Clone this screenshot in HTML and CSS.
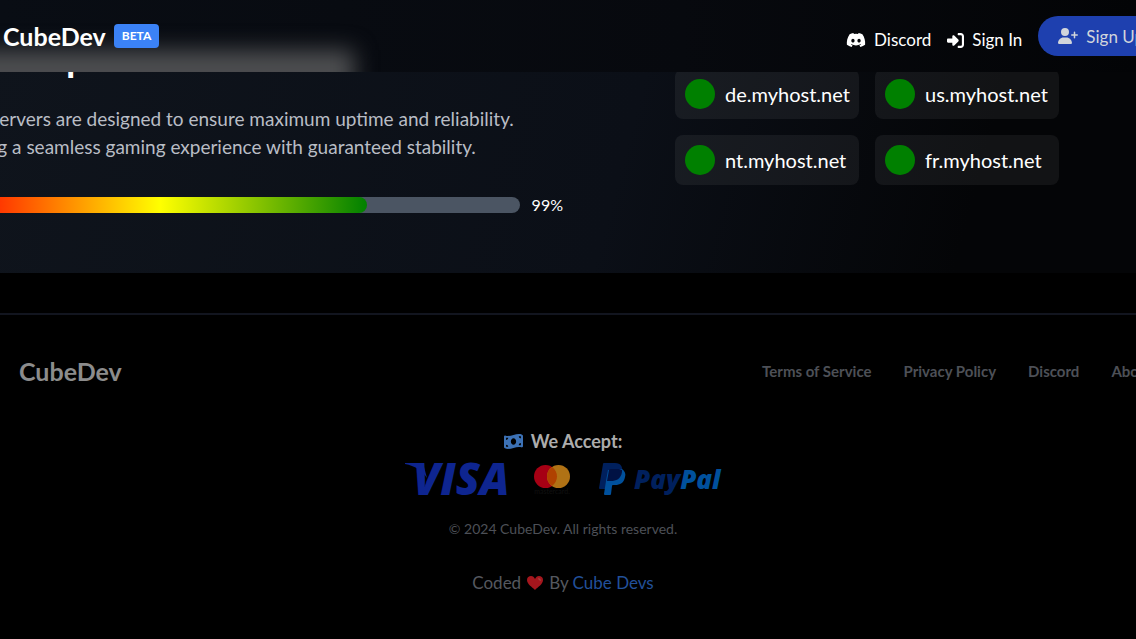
FILE: index.html
```html
<!DOCTYPE html>
<html lang="en">
<head>
  <meta charset="UTF-8" />
  <meta name="viewport" content="width=device-width, initial-scale=1.0" />
  <title>CubeDev</title>
  <link rel="stylesheet" href="styles.css">
</head>
<body>
  <header class="topbar">
    <a class="brand" href="#">CubeDev</a>
    <span class="badge">BETA</span>
    <nav class="topnav">
      <a href="#">
        <svg class="icon-discord" viewBox="0 0 640 512" fill="currentColor"><path d="M524.531,69.836a1.5,1.5,0,0,0-.764-.7A485.065,485.065,0,0,0,404.081,32.03a1.816,1.816,0,0,0-1.923.91,337.461,337.461,0,0,0-14.9,30.6,447.848,447.848,0,0,0-134.426,0,309.541,309.541,0,0,0-15.135-30.6,1.89,1.89,0,0,0-1.924-.91A483.689,483.689,0,0,0,116.085,69.137a1.712,1.712,0,0,0-.788.676C39.068,183.651,18.186,294.69,28.43,404.354a2.016,2.016,0,0,0,.765,1.375A487.666,487.666,0,0,0,176.02,479.918a1.9,1.9,0,0,0,2.063-.676A348.2,348.2,0,0,0,208.12,430.4a1.86,1.86,0,0,0-1.019-2.588,321.173,321.173,0,0,1-45.868-21.853,1.885,1.885,0,0,1-.185-3.126c3.082-2.309,6.166-4.711,9.109-7.137a1.819,1.819,0,0,1,1.9-.256c96.229,43.917,200.41,43.917,295.5,0a1.812,1.812,0,0,1,1.924.233c2.944,2.426,6.027,4.851,9.132,7.16a1.884,1.884,0,0,1-.162,3.126,301.407,301.407,0,0,1-45.89,21.83,1.875,1.875,0,0,0-1,2.611,391.055,391.055,0,0,0,30.014,48.815,1.864,1.864,0,0,0,2.063.7A486.048,486.048,0,0,0,610.7,405.729a1.882,1.882,0,0,0,.765-1.352C623.729,277.594,590.933,167.465,524.531,69.836ZM222.491,337.58c-28.972,0-52.844-26.587-52.844-59.239S193.056,219.1,222.491,219.1c29.665,0,53.306,26.82,52.843,59.239C275.334,310.993,251.924,337.58,222.491,337.58Zm195.38,0c-28.971,0-52.843-26.587-52.843-59.239S388.437,219.1,417.871,219.1c29.667,0,53.307,26.82,52.844,59.239C470.715,310.993,447.538,337.58,417.871,337.58Z"/></svg>
        Discord
      </a>
      <a href="#">
        <svg class="icon-signin" viewBox="0 0 512 512" fill="currentColor"><path d="M217.9 105.9L340.7 228.7c7.2 7.2 11.3 17.1 11.3 27.3s-4.1 20.1-11.3 27.3L217.9 406.1c-6.4 6.4-15 9.9-24 9.9c-18.7 0-33.9-15.2-33.9-33.9l0-62.1L32 320c-17.7 0-32-14.3-32-32l0-64c0-17.7 14.3-32 32-32l128 0 0-62.1c0-18.7 15.2-33.9 33.9-33.9c9 0 17.6 3.6 24 9.9zM352 416l64 0c17.7 0 32-14.3 32-32l0-256c0-17.7-14.3-32-32-32l-64 0c-17.7 0-32-14.3-32-32s14.3-32 32-32l64 0c53 0 96 43 96 96l0 256c0 53-43 96-96 96l-64 0c-17.7 0-32-14.3-32-32s14.3-32 32-32z"/></svg>
        Sign In
      </a>
    </nav>
    <button class="signup" type="button">
      <svg class="icon-user" viewBox="0 0 640 512" fill="currentColor"><path d="M96 128a128 128 0 1 1 256 0A128 128 0 1 1 96 128zM0 482.3C0 383.8 79.8 304 178.3 304h91.4C368.2 304 448 383.8 448 482.3c0 16.4-13.3 29.7-29.7 29.7H29.7C13.3 512 0 498.7 0 482.3zM504 312V248H440c-13.3 0-24-10.7-24-24s10.7-24 24-24h64V136c0-13.3 10.7-24 24-24s24 10.7 24 24v64h64c13.3 0 24 10.7 24 24s-10.7 24-24 24H552v64c0 13.3-10.7 24-24 24s-24-10.7-24-24z"/></svg>
      Sign Up
    </button>
  </header>

  <main class="uptime">
    <section class="uptime-info">
      <h2>99% Uptime Guarantee</h2>
      <p>Our servers are designed to ensure maximum uptime and reliability.<br>Giving a seamless gaming experience with guaranteed stability.</p>
      <div class="meter">
        <div class="meter-track" role="progressbar" aria-valuenow="99" aria-valuemin="0" aria-valuemax="100" aria-label="Uptime">
          <div class="meter-fill" style="width: 73%"></div>
        </div>
        <span class="meter-value">99%</span>
      </div>
    </section>
    <ul class="hosts">
      <li><span class="dot"></span>de.myhost.net</li>
      <li><span class="dot"></span>us.myhost.net</li>
      <li><span class="dot"></span>nt.myhost.net</li>
      <li><span class="dot"></span>fr.myhost.net</li>
    </ul>
  </main>

  <footer class="footer">
    <div class="footer-top">
      <a class="footer-brand" href="#">CubeDev</a>
      <nav class="footer-nav">
        <a href="#">Terms of Service</a>
        <a href="#">Privacy Policy</a>
        <a href="#">Discord</a>
        <a href="#">About Us</a>
      </nav>
    </div>
    <div class="footer-center">
      <h3>
        <svg class="icon-money" viewBox="0 0 576 512" fill="currentColor"><path d="M0 112.5V422.3c0 18 10.1 35 27 41.3c87 32.5 174 10.3 261-11.9c79.8-20.3 159.6-40.7 239.3-18.9c23 6.3 48.7-9.5 48.7-33.4V89.7c0-18-10.1-35-27-41.3C462 15.9 375 38.1 288 60.3C208.2 80.6 128.4 100.9 48.7 79.1C25.6 72.8 0 88.6 0 112.5zM288 352c-44.2 0-80-43-80-96s35.8-96 80-96s80 43 80 96s-35.8 96-80 96zM64 352c35.3 0 64 28.7 64 64H64V352zm64-208c0 35.3-28.7 64-64 64V144h64zM512 304v64H448c0-35.3 28.7-64 64-64zM448 96h64v64c-35.3 0-64-28.7-64-64z"/></svg>
        We Accept:
      </h3>
      <div class="cards">
        <svg class="visa" viewBox="0 0 100 32" role="img" aria-label="Visa">
          <path d="M0 0h14c3 0 4 1 5 4l3 11C17 7 10 3 0 1z"/>
          <text x="8" y="32">VISA</text>
        </svg>
        <svg class="mastercard" viewBox="0 0 38 32" role="img" aria-label="Mastercard">
          <circle cx="12.5" cy="13.5" r="11.5" fill="#a60014"/>
          <circle cx="25.5" cy="13.5" r="11.5" fill="#b07215"/>
          <path d="M19 4a11.5 11.5 0 0 1 0 19a11.5 11.5 0 0 1 0-19z" fill="#b04200"/>
          <text x="19" y="31">mastercard.</text>
        </svg>
        <svg class="paypal" viewBox="0 0 122 32" role="img" aria-label="PayPal">
          <path d="M4 1q0-1 1-1h11c6 0 8 4 7 9c-1 7-6 9-11 9H9q-1 0-1 1L7 26H1q-1 0-1-1z" fill="#00205d"/>
          <path d="M23 6c3 2 4 5 3 8c-1 6-5 8-10 8h-2q-1 0-1 1l-1 8q0 1-1 1H6q-1 0-1-1L7 18l2-11z" fill="#00509c"/>
          <path d="M8 18L10 7q0-1 2-1h8l3 1v2c-1 7-6 9-11 9z" fill="#001244"/>
          <text x="35" y="26"><tspan fill="#00205d">Pay</tspan><tspan fill="#00509c">Pal</tspan></text>
        </svg>
      </div>
      <p class="copyright">© 2024 CubeDev. All rights reserved.</p>
      <p class="credits">
        Coded
        <svg class="icon-heart" viewBox="0 0 16 16"><path d="M8 15C5 12 0 9 0 5C0 2 2 1 4 1c2 0 3 1 4 3c1-2 2-3 4-3s4 1 4 4c0 4-5 7-8 10z" fill="#a5161d"/><path d="M11 3c2 0 3 1 3 3c-1 0-3-1-3-3z" fill="#a4403c"/></svg>
        <span>By <a href="#">Cube Devs</a></span>
      </p>
    </div>
  </footer>
</body>
</html>
```
FILE: styles.css
```css
* { box-sizing: border-box; }
body { margin: 0; background: #000; color: #fff; font-family: Lato, sans-serif; font-size: 16px; line-height: 24px; overflow: hidden; }
a { color: inherit; text-decoration: none; }
svg { flex: none; }
h2, h3, p, ul { margin: 0; padding: 0; }

.topbar { position: fixed; top: 0; left: 0; right: 0; z-index: 10; display: flex; align-items: center; height: 72px; padding-left: 3px; background: linear-gradient(to right, #090d14, #07090e 60%, #030406); overflow: hidden; }
/* soft glow of the heading behind the bar */
.topbar::before { content: ""; position: absolute; z-index: -1; left: -46px; top: 50px; width: 400px; height: 40px; background: #4e4f51; filter: blur(11px); }
.brand { font-size: 25px; font-weight: 700; }
.badge { margin-left: 8px; padding: 0 8px; border-radius: 4px; background: #3b82f6; font-size: 12px; font-weight: 700; }
.topnav { display: flex; gap: 16px; margin: 8px 16px 0 auto; font-size: 17px; }
.topnav a { display: flex; align-items: center; gap: 8px; }
.icon-discord { width: 20px; height: 16px; }
.icon-signin { width: 17px; height: 17px; }
.icon-user { width: 20px; height: 16px; }
.signup { display: flex; align-items: center; gap: 8px; height: 40px; margin-right: -28px; padding: 0 20px; border: 0; border-radius: 20px; background: #1e40af; color: #d1d5db; font-family: inherit; font-size: 17px; white-space: nowrap; }

.uptime { display: grid; grid-template-columns: minmax(0, 1fr) 384px; gap: 112px; padding: 37px 77px 60px 0; background: linear-gradient(105deg, #0f141c, #0b0f17 55%, #040507 85%); }
.uptime-info { margin-left: -46px; white-space: nowrap; }
.uptime h2 { font-size: 38px; line-height: 40px; font-weight: 700; }
.uptime p { margin-top: 28px; color: #b9bdc5; font-size: 19px; line-height: 28px; }
.meter { display: flex; align-items: center; gap: 12px; height: 16px; margin-top: 36px; }
.meter-track { flex: 1; height: 16px; border-radius: 8px; background: #4b5563; overflow: hidden; }
.meter-fill { height: 100%; border-radius: 8px; background: linear-gradient(to right, red, yellow, green); }
.hosts { display: grid; grid-template-columns: repeat(2, minmax(0, 1fr)); gap: 16px; align-content: start; padding-top: 32px; list-style: none; font-size: 20px; line-height: 20px; white-space: nowrap; }
.hosts li { display: flex; align-items: center; gap: 10px; height: 50px; padding: 0 10px; border-radius: 8px; background: rgba(255, 255, 255, 0.06); }
.dot { flex: none; width: 30px; height: 30px; border-radius: 50%; background: #008000; }

.footer { margin-top: 40px; padding-top: 40px; border-top: 2px solid #12151f; color: #4d5057; }
.footer-top { display: flex; align-items: center; justify-content: space-between; height: 31px; margin-right: -38px; padding-left: 19px; }
.footer-brand { color: #8c8c8c; font-size: 25px; font-weight: 700; }
.footer-nav { display: flex; gap: 32px; font-size: 15px; font-weight: 700; white-space: nowrap; }
.footer-center { display: flex; flex-direction: column; align-items: center; padding: 41px 10px 0 0; }
.footer h3 { display: flex; align-items: center; gap: 8px; color: #acacac; font-size: 18px; line-height: 28px; }
.icon-money { width: 19px; height: 17px; color: #3c71b5; }
.cards { display: flex; gap: 28px; margin-top: 8px; }
.cards svg { height: 32px; overflow: visible; }
.visa { width: 100px; fill: #0e2590; }
.visa text { font-family: "Open Sans", sans-serif; font-size: 44px; font-weight: 800; font-style: italic; }
.mastercard { width: 38px; }
.mastercard text { fill: #101010; font-size: 7px; text-anchor: middle; }
.paypal { width: 122px; }
.paypal text { font-family: "Open Sans", sans-serif; font-size: 26px; font-weight: 800; font-style: italic; }
.copyright { margin-top: 22px; font-size: 14px; }
.credits { display: flex; align-items: center; gap: 6px; margin-top: 30px; color: #55585f; font-size: 17px; }
.credits a { color: #22509a; }
.icon-heart { width: 16px; height: 16px; }
```
